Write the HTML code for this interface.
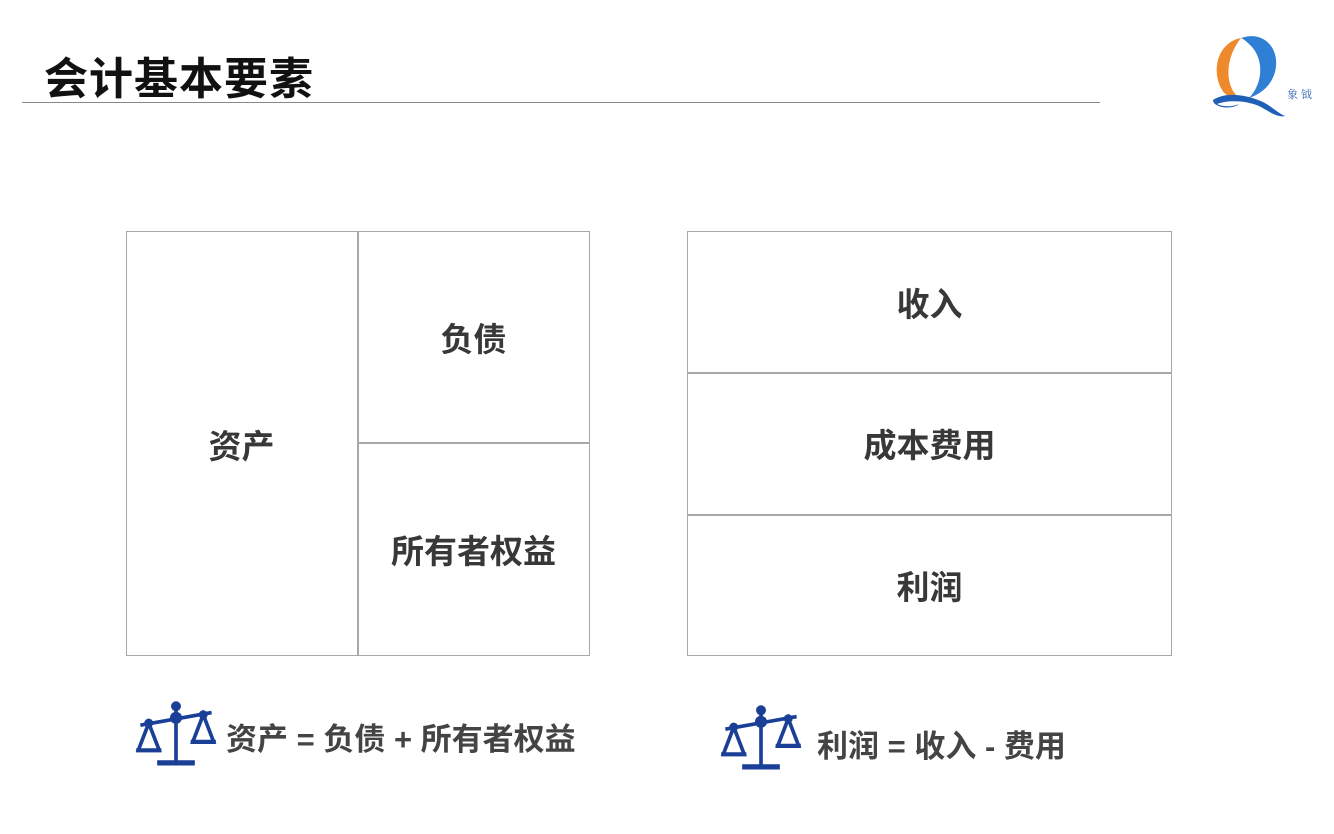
<!DOCTYPE html>
<html><head><meta charset="utf-8"><style>
body{margin:0;width:1334px;height:834px;background:#fff;position:relative;overflow:hidden;font-family:"Liberation Sans","Noto Sans CJK SC",sans-serif}
.a{position:absolute}
.t{font-weight:bold;color:#383838;font-size:33px;display:flex;align-items:center;justify-content:center}
.box{border:1.5px solid #a8a8a8;box-sizing:border-box}
</style></head><body>
<div class="a" style="left:44px;top:52px;font-size:44px;letter-spacing:1px;font-weight:bold;color:#111;line-height:56px">会计基本要素</div>
<div class="a" style="left:22px;top:102px;width:1078px;height:1px;background:#888"></div>
<svg class="a" style="left:1205px;top:28px" width="115" height="92" viewBox="0 0 115 92">
<path d="M36 10 C14 14 6 40 16 60 C20 68 26 70 32 68 C20 56 20 30 36 10Z" fill="#ef8a2c"/>
<path d="M36 10 C58 2 76 20 70 44 C66 58 56 66 44 70 C58 56 60 30 44 16 C40 12 38 11 36 10Z" fill="#2f7fd4"/>
<path d="M8 72 C20 64 40 66 58 74 C66 78 74 86 80 88 C72 90 62 82 54 78 C40 72 22 72 12 76 C20 80 30 78 34 76 C28 82 8 80 8 72Z" fill="#1f5fb8"/>
<text x="82" y="70" font-size="11" fill="#2c5fb0" font-family="Noto Serif CJK SC,serif">象 钺</text>
</svg>
<div class="a box" style="left:126px;top:231px;width:464px;height:425px"></div>
<div class="a" style="left:357px;top:231px;width:1.5px;height:425px;background:#a8a8a8"></div>
<div class="a" style="left:357px;top:442px;width:233px;height:1.5px;background:#a8a8a8"></div>
<div class="a t" style="left:126px;top:231px;width:231px;height:425px">资产</div>
<div class="a t" style="left:357px;top:231px;width:233px;height:211px">负债</div>
<div class="a t" style="left:357px;top:442px;width:233px;height:214px">所有者权益</div>
<div class="a box" style="left:687px;top:231px;width:485px;height:425px"></div>
<div class="a" style="left:687px;top:372px;width:485px;height:1.5px;background:#a8a8a8"></div>
<div class="a" style="left:687px;top:514px;width:485px;height:1.5px;background:#a8a8a8"></div>
<div class="a t" style="left:687px;top:231px;width:485px;height:141px">收入</div>
<div class="a t" style="left:687px;top:372px;width:485px;height:142px">成本费用</div>
<div class="a t" style="left:687px;top:514px;width:485px;height:141px">利润</div>
<svg width="0" height="0" style="position:absolute"><defs><g id="sc" fill="none" stroke="#1a3f96" stroke-width="3.5">
<path d="M6 24 L74 12"/><path d="M40 6 V58"/><path d="M22 60 H58" stroke-width="5"/>
<path d="M14 22 L4 48 H24 Z"/><path d="M66 14 L56 40 H76 Z"/>
<path d="M2 48 H26" stroke-width="4"/><path d="M54 40 H78" stroke-width="4"/>
<circle cx="40" cy="6" r="3" fill="#1a3f96"/><circle cx="40" cy="17" r="4" fill="#1a3f96"/><circle cx="14" cy="22" r="2.5" fill="#1a3f96"/><circle cx="66" cy="14" r="2.5" fill="#1a3f96"/>
</g></defs></svg>
<svg class="a" style="left:134px;top:700px" width="84" height="66" viewBox="0 0 80 63"><use href="#sc"/></svg>
<svg class="a" style="left:719px;top:704px" width="84" height="66" viewBox="0 0 80 63"><use href="#sc"/></svg>
<div class="a" style="left:226px;top:714px;font-size:31px;font-weight:bold;color:#444">资产 = 负债 + 所有者权益</div>
<div class="a" style="left:817px;top:721px;font-size:31px;font-weight:bold;color:#444">利润 = 收入 - 费用</div>
</body></html>
